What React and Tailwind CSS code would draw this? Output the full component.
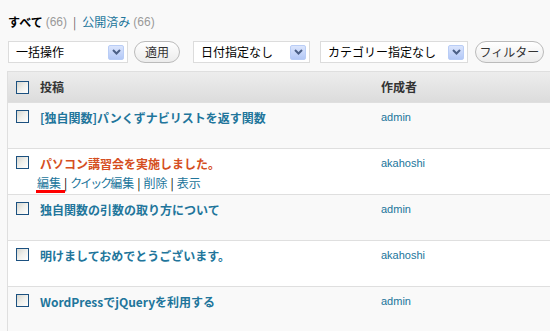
import React from 'react';

const jp = { fontFamily: '"Noto Sans CJK JP", "Liberation Sans", sans-serif' };
const latin = { fontFamily: '"Liberation Sans", "Noto Sans CJK JP", sans-serif' };

const Checkbox = () => (
  <div className="w-[13px] h-[13px] border border-[#1c5180] bg-linear-to-br from-[#d6d6cf] via-[#f0f0ec] to-white" />
);

const Select = ({ label, width }) => (
  <div
    className="h-[22px] bg-white border border-[#dcdcdc] flex items-center justify-between pl-[7px] pr-[3px]"
    style={{ width }}
  >
    <span className="text-[12px] text-black leading-none">{label}</span>
    <div className="w-[16px] h-[15px] rounded-[2px] border border-[#b9cdf6] bg-linear-to-b from-[#dbe5fd] to-[#b3c8f6] flex items-center justify-center">
      <svg width="9" height="6" viewBox="0 0 9 6">
        <path d="M1 1 L4.5 4.5 L8 1" fill="none" stroke="#4b5f86" strokeWidth="2" />
      </svg>
    </div>
  </div>
);

const Button = ({ label, width }) => (
  <div
    className="h-[22px] rounded-full border border-[#bbbbbb] bg-linear-to-b from-white to-[#ececec] flex items-center justify-center text-[12px] text-[#333] leading-none"
    style={{ width }}
  >
    {label}
  </div>
);

const rows = [
  { title: '[独自関数]パンくずナビリストを返す関数', author: 'admin', bg: 'bg-[#f9f9f9]' },
  { title: 'パソコン講習会を実施しました。', author: 'akahoshi', bg: 'bg-white', active: true },
  { title: '独自関数の引数の取り方について', author: 'admin', bg: 'bg-[#f9f9f9]' },
  { title: '明けましておめでとうございます。', author: 'akahoshi', bg: 'bg-white' },
  { title: 'WordPressでjQueryを利用する', author: 'admin', bg: 'bg-[#f9f9f9]' },
];

export default function App() {
  return (
    <div className="w-[550px] h-[331px] overflow-hidden bg-[#f9f9f9]" style={jp}>
      <div className="pl-[8px] pt-[15px] h-[35px] flex items-start text-[12px] leading-[14px]">
        <span className="font-bold text-black">すべて</span>
        <span className="text-[#999] ml-[3px]" style={latin}>(66)</span>
        <span className="text-[#666] mx-[6px]">|</span>
        <span className="text-[#21759b]">公開済み</span>
        <span className="text-[#999] ml-[3px]" style={latin}>(66)</span>
      </div>

      <div className="flex items-center pl-[8px] pt-[6px]">
        <Select label="一括操作" width="120px" />
        <div className="ml-[6px]"><Button label="適用" width="46px" /></div>
        <div className="ml-[13px]"><Select label="日付指定なし" width="117px" /></div>
        <div className="ml-[10px]"><Select label="カテゴリー指定なし" width="148px" /></div>
        <div className="ml-[7px]"><Button label="フィルター" width="69px" /></div>
      </div>

      <div className="ml-[7px] mt-[8px] w-[600px] border-l border-t border-[#dfdfdf]">
        <div className="h-[31px] flex items-center bg-linear-to-b from-[#ededed] to-[#dcdcdc] border-b border-[#dfdfdf]">
          <div className="w-[32px] pl-[8px]"><Checkbox /></div>
          <div className="w-[341px] text-[12px] font-bold text-[#333]">投稿</div>
          <div className="text-[12px] font-bold text-[#333]">作成者</div>
        </div>
        {rows.map((r, i) => (
          <div key={i} className={`h-[46px] flex items-start border-b border-[#dfdfdf] ${r.bg}`}>
            <div className="w-[32px] pl-[8px] pt-[7px]"><Checkbox /></div>
            <div className="w-[341px] pt-[7px]">
              <div className={`text-[12px] font-bold leading-[15px] ${r.active ? 'text-[#d54e21]' : 'text-[#21759b]'}`}>
                {r.title}
              </div>
              {r.active && (
                <div className="mt-[5px] -ml-[3px] text-[12px] leading-[14px] text-[#21759b] flex">
                  <span className="relative">
                    編集
                    <span className="absolute left-[-1px] top-[14px] w-[29px] h-[3px] bg-[#ff0000]" />
                  </span>
                  <span className="text-black mx-[3px]">|</span>
                  <span><span className="tracking-[-2px]">クイック</span>編集</span>
                  <span className="text-black mx-[3px]">|</span>
                  <span>削除</span>
                  <span className="text-black mx-[3px]">|</span>
                  <span>表示</span>
                </div>
              )}
            </div>
            <div className="pt-[7px] text-[11px] leading-[15px] text-[#21759b]" style={latin}>{r.author}</div>
          </div>
        ))}
      </div>
    </div>
  );
}
